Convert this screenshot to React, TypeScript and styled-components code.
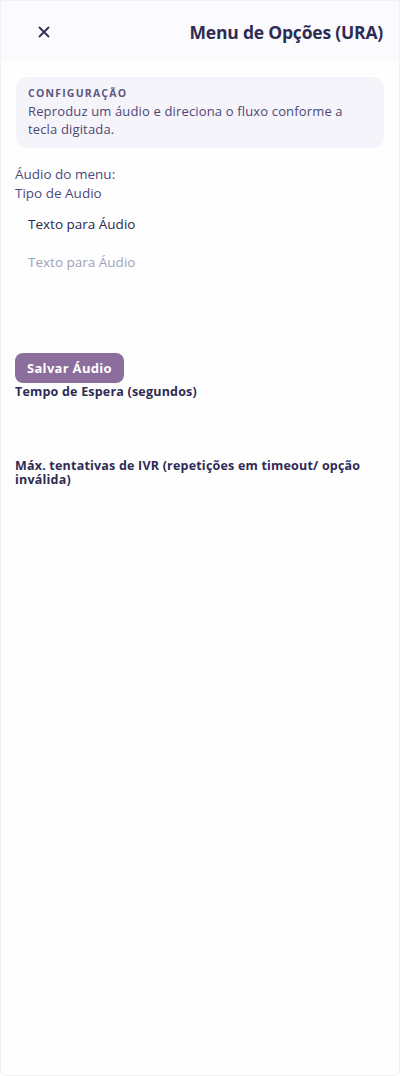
import React from 'react'
import styled, { createGlobalStyle } from 'styled-components'

const GlobalStyle = createGlobalStyle`
    html, body {
        margin: 0;
        padding: 0;
        background: #ffffff;
        font-family: "Open Sans", "Noto Sans", sans-serif;
    }
    * {
        box-sizing: border-box;
    }
`

const StyledPanel = styled.div`
    height: 1076px;
    border: 1px solid #f1f1f3;
    border-radius: 0 0 6px 6px;
    background: #fefefe;
    display: flex;
    flex-direction: column;
`

const StyledHeader = styled.div`
    height: 61px;
    background: #fbfbfd;
    display: flex;
    align-items: center;
    justify-content: space-between;
    padding: 0 16px 0 29px;
`

const StyledCloseButton = styled.button`
    border: none;
    background: transparent;
    width: 28px;
    height: 28px;
    display: flex;
    align-items: center;
    justify-content: center;
    padding: 0;
    cursor: pointer;
`

const StyledTitle = styled.h1`
    margin: 0;
    font-size: 17.5px;
    font-weight: 700;
    color: #2e2b55;
    letter-spacing: -0.2px;
`

const StyledBody = styled.div`
    padding: 15px 14px;
    display: flex;
    flex-direction: column;
`

const StyledInfoCard = styled.div`
    background: #f6f4fb;
    border-radius: 10px;
    margin: 0 1px 17px;
    padding: 8px 12px 10px;
`

const StyledInfoLabel = styled.div`
    font-size: 10.5px;
    font-weight: 700;
    letter-spacing: 1.2px;
    color: #5d5880;
    line-height: 16px;
    margin-bottom: 2px;
`

const StyledInfoText = styled.p`
    margin: 0;
    font-size: 13px;
    line-height: 17.5px;
    letter-spacing: 0.15px;
    color: #4d4873;
`

const StyledPlainLabel = styled.div`
    font-size: 13.5px;
    line-height: 19px;
    color: #4d4a7c;
`

const StyledOption = styled.div<{ $muted?: boolean }>`
    padding: 0 13px;
    font-size: 13.5px;
    font-weight: ${p => (p.$muted ? 400 : 500)};
    color: ${p => (p.$muted ? '#a3a1b6' : '#2b2850')};
    line-height: 20px;
    margin-top: ${p => (p.$muted ? '18px' : '11px')};
`

const StyledSaveButton = styled.button`
    margin-top: 81px;
    align-self: flex-start;
    height: 30px;
    padding: 0 12px;
    border: none;
    border-radius: 8px;
    background: #8b6e9c;
    color: #ffffff;
    font-family: inherit;
    font-size: 13px;
    font-weight: 700;
    letter-spacing: 0.3px;
    cursor: pointer;
`

const StyledFieldLabel = styled.div<{ $gap?: number }>`
    margin-top: ${p => p.$gap ?? 0}px;
    font-size: 12.5px;
    font-weight: 700;
    color: #2e2b55;
    line-height: 14px;
    letter-spacing: 0.2px;
`

const App = () => {
    return (
        <>
            <GlobalStyle />
            <StyledPanel>
                <StyledHeader>
                    <StyledCloseButton aria-label="Fechar">
                        <svg width="14" height="14" viewBox="0 0 14 14">
                            <path d="M2.5 2.5 L11.5 11.5 M11.5 2.5 L2.5 11.5" stroke="#2e2b55" strokeWidth="1.8" strokeLinecap="round" />
                        </svg>
                    </StyledCloseButton>
                    <StyledTitle>Menu de Opções (URA)</StyledTitle>
                </StyledHeader>
                <StyledBody>
                    <StyledInfoCard>
                        <StyledInfoLabel>CONFIGURAÇÃO</StyledInfoLabel>
                        <StyledInfoText>
                            Reproduz um áudio e direciona o fluxo conforme a tecla digitada.
                        </StyledInfoText>
                    </StyledInfoCard>
                    <StyledPlainLabel>Áudio do menu:</StyledPlainLabel>
                    <StyledPlainLabel>Tipo de Audio</StyledPlainLabel>
                    <StyledOption>Texto para Áudio</StyledOption>
                    <StyledOption $muted>Texto para Áudio</StyledOption>
                    <StyledSaveButton>Salvar Áudio</StyledSaveButton>
                    <StyledFieldLabel $gap={2}>Tempo de Espera (segundos)</StyledFieldLabel>
                    <StyledFieldLabel $gap={60}>
                        Máx. tentativas de IVR (repetições em timeout/ opção inválida)
                    </StyledFieldLabel>
                </StyledBody>
            </StyledPanel>
        </>
    )
}

export default App
